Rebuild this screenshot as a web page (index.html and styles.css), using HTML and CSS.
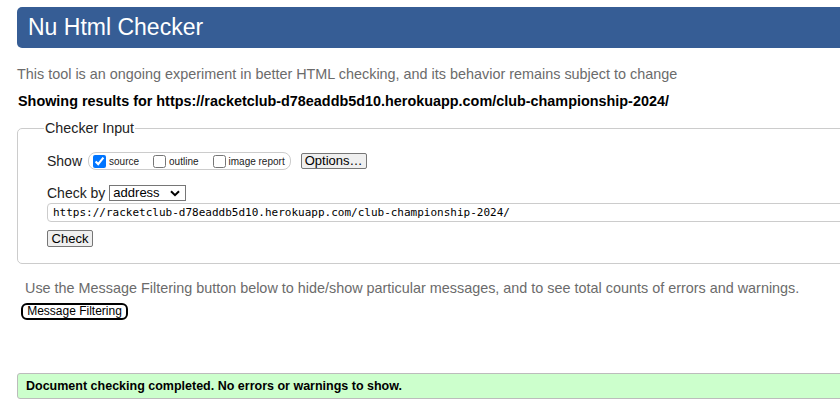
FILE: index.html
```html
<!DOCTYPE html>
<html lang="en">
<head>
<meta charset="utf-8">
<title>Nu Html Checker</title>
<link rel="stylesheet" href="styles.css">
</head>
<body>
<div class="page">
  <h1 class="title">Nu Html Checker</h1>
  <p class="intro">This tool is an ongoing experiment in better HTML checking, and its behavior remains subject to change</p>
  <p class="results">Showing results for https://racketclub-d78eaddb5d10.herokuapp.com/club-championship-2024/</p>
  <fieldset class="checker">
    <legend class="legend">Checker Input</legend>
    <div class="row show-row">
      <span class="label">Show</span>
      <span class="opts">
        <label class="opt"><input type="checkbox" class="cb" checked><span>source</span></label>
        <label class="opt"><input type="checkbox" class="cb"><span>outline</span></label>
        <label class="opt last"><input type="checkbox" class="cb"><span>image report</span></label>
      </span>
      <button class="btn options">Options…</button>
    </div>
    <div class="row by-row">
      <span class="label">Check by</span>
      <span class="select">address<svg class="chev" width="10" height="7" viewBox="0 0 10 7"><path d="M1 1.2 L5 5.2 L9 1.2" fill="none" stroke="#000" stroke-width="2"/></svg></span>
    </div>
    <div class="url">https://racketclub-d78eaddb5d10.herokuapp.com/club-championship-2024/</div>
    <button class="btn check">Check</button>
  </fieldset>
  <p class="filter-note">Use the Message Filtering button below to hide/show particular messages, and to see total counts of errors and warnings.</p>
  <button class="filter-btn">Message Filtering</button>
  <div class="success">Document checking completed. No errors or warnings to show.</div>
</div>
</body>
</html>
```
FILE: styles.css
```css
html, body {
  margin: 0;
  padding: 0;
  overflow: hidden;
  background: #fff;
}
body {
  font-family: "Liberation Sans", Arial, sans-serif;
  color: #222;
}
.page {
  width: 1000px;
  padding: 7px 0 0 17px;
}
.title {
  margin: 0;
  height: 41px;
  line-height: 41px;
  background: #365d95;
  color: #fff;
  font-size: 23px;
  font-weight: normal;
  padding-left: 11px;
  border-radius: 5px;
}
.intro {
  margin: 18px 0 0 0;
  font-size: 14.4px;
  line-height: 16px;
  color: #6b6b6b;
}
.results {
  margin: 11px 0 0 1px;
  font-size: 14.4px;
  line-height: 16px;
  font-weight: bold;
  color: #000;
}
.checker {
  margin: 11px 0 0 0;
  border: 1px solid #cccccc;
  border-radius: 5px;
  padding: 16px 0 16px 29px;
  min-width: 0;
}
.legend {
  margin-left: -3px;
  padding: 0 1px;
  font-size: 14.3px;
  line-height: 16px;
  color: #222;
}
.row {
  display: flex;
  align-items: center;
}
.label {
  font-size: 14px;
  line-height: 16px;
  color: #222;
}
.show-row {
  height: 18px;
}
.opts {
  display: flex;
  align-items: center;
  height: 16px;
  margin-left: 6px;
  border: 1px solid #cccccc;
  border-radius: 8px;
  padding: 0 5px 0 4px;
}
.opt {
  display: flex;
  align-items: center;
  font-size: 10px;
  color: #222;
  margin-right: 14px;
}
.opt.last {
  margin-right: 0;
}
.cb {
  margin: 0 3px 0 0;
  width: 13px;
  height: 13px;
}
.btn {
  font-family: "Liberation Sans", Arial, sans-serif;
  font-size: 13px;
  background: #efefef;
  border: 1px solid #767676;
  border-radius: 2px;
  color: #000;
  padding: 0 6px;
  margin: 0;
}
.options {
  margin-left: 10px;
  height: 16px;
  line-height: 14px;
  width: 66px;
  padding: 0;
}
.by-row {
  margin-top: 15px;
  height: 16px;
}
.select {
  display: flex;
  align-items: center;
  justify-content: space-between;
  margin-left: 4px;
  width: 77px;
  height: 16px;
  box-sizing: border-box;
  border: 1px solid #767676;
  font-size: 13px;
  line-height: 14px;
  color: #000;
  padding: 0 5px 0 3px;
}
.chev {
  display: block;
}
.url {
  margin-top: 2px;
  height: 19px;
  box-sizing: border-box;
  border: 1px solid #cccccc;
  border-radius: 4px;
  font-family: "DejaVu Sans Mono", "Liberation Mono", monospace;
  font-size: 11px;
  line-height: 17px;
  padding-left: 5px;
  color: #000;
}
.check {
  display: block;
  margin-top: 8px;
  height: 17px;
  width: 46px;
  line-height: 15px;
  padding: 0;
}
.filter-note {
  margin: 16px 0 0 8px;
  font-size: 14.4px;
  line-height: 16px;
  color: #6b6b6b;
}
.filter-btn {
  display: block;
  margin: 7px 0 0 4px;
  height: 17px;
  width: 107px;
  box-sizing: border-box;
  padding: 0;
  border: 2px solid #000;
  border-radius: 6px;
  background: #fff;
  font-family: "Liberation Sans", Arial, sans-serif;
  font-size: 12px;
  line-height: 13px;
  color: #000;
}
.success {
  margin-top: 53px;
  height: 26px;
  box-sizing: border-box;
  background: #ccffcc;
  border: 1px solid #bcbcbc;
  border-radius: 3px;
  padding-left: 8px;
  font-size: 12.5px;
  line-height: 24px;
  font-weight: bold;
  color: #000;
}
```
